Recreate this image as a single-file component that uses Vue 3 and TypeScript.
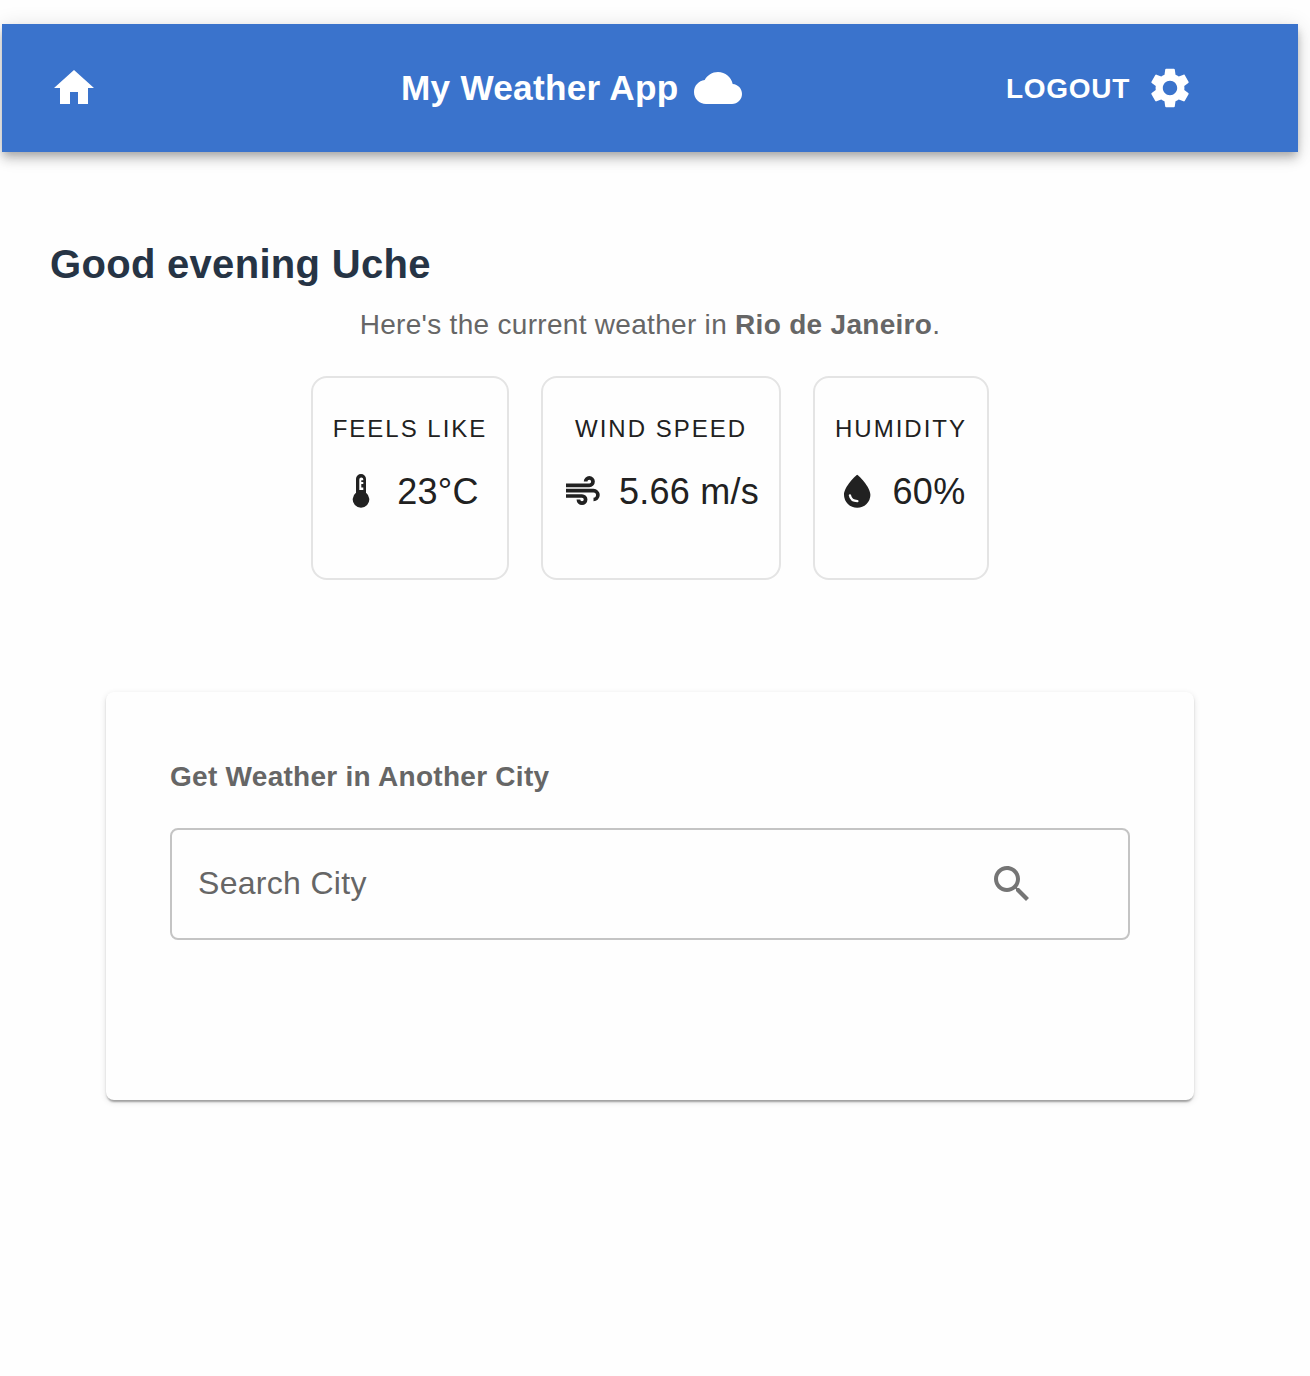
<script setup lang="ts">
import { ref } from 'vue'

type Kind = 'temp' | 'wind' | 'humidity'

interface Metric {
  kind: Kind
  label: string
  value: string
}

const city = ref('')
const metrics: Metric[] = [
  { kind: 'temp', label: 'Feels like', value: '23°C' },
  { kind: 'wind', label: 'Wind speed', value: '5.66 m/s' },
  { kind: 'humidity', label: 'Humidity', value: '60%' },
]
</script>

<template>
  <div class="page">
    <header class="bar">
      <a class="home" aria-label="Home">
        <svg class="icon" viewBox="0 0 24 24"><path d="M10 20v-6h4v6h5v-8h3L12 3 2 12h3v8z" /></svg>
      </a>
      <div class="brand">
        <span class="title">My Weather App</span>
        <svg class="icon" viewBox="0 0 24 24">
          <path d="M19.35 10.04C18.67 6.59 15.64 4 12 4 9.11 4 6.6 5.64 5.35 8.04 2.34 8.36 0 10.91 0 14c0 3.31 2.69 6 6 6h13c2.76 0 5-2.24 5-5 0-2.64-2.05-4.78-4.65-4.96z" />
        </svg>
      </div>
      <div class="actions">
        <span class="logout">LOGOUT</span>
        <svg class="icon" viewBox="0 0 24 24">
          <path d="M19.14 12.94c.04-.3.06-.61.06-.94 0-.32-.02-.64-.07-.94l2.03-1.58c.18-.14.23-.41.12-.61l-1.92-3.32c-.12-.22-.37-.29-.59-.22l-2.39.96c-.5-.38-1.03-.7-1.62-.94l-.36-2.54c-.04-.24-.24-.41-.48-.41h-3.84c-.24 0-.43.17-.47.41l-.36 2.54c-.59.24-1.13.57-1.62.94l-2.39-.96c-.22-.08-.47 0-.59.22L2.74 8.87c-.12.21-.08.47.12.61l2.03 1.58c-.05.3-.09.63-.09.94s.02.64.07.94l-2.03 1.58c-.18.14-.23.41-.12.61l1.92 3.32c.12.22.37.29.59.22l2.39-.96c.5.38 1.03.7 1.62.94l.36 2.54c.05.24.24.41.48.41h3.84c.24 0 .44-.17.47-.41l.36-2.54c.59-.24 1.13-.56 1.62-.94l2.39.96c.22.08.47 0 .59-.22l1.92-3.32c.12-.22.07-.47-.12-.61l-2.01-1.58zM12 15.6c-1.98 0-3.6-1.62-3.6-3.6s1.62-3.6 3.6-3.6 3.6 1.62 3.6 3.6-1.62 3.6-3.6 3.6z" />
        </svg>
      </div>
    </header>

    <main>
      <h1 class="greeting">Good evening Uche</h1>
      <p class="summary">Here's the current weather in <b>Rio de Janeiro</b>.</p>

      <section class="cards">
        <article v-for="m in metrics" :key="m.kind" class="card" :class="m.kind">
          <div class="label">{{ m.label }}</div>
          <div class="reading">
            <svg v-if="m.kind === 'temp'" class="glyph" viewBox="0 0 36 36">
              <path d="M13 6a5 5 0 0 1 10 0v13.8a8.3 8.3 0 1 1-10 0z" />
              <path class="cut" d="M16.3 6.4a1.9 1.9 0 0 1 4 0v.8h-2v1.9h2v1.8h-2v3.7h2V17h-4z" />
            </svg>
            <svg v-else-if="m.kind === 'wind'" class="glyph line" viewBox="0 0 36 36">
              <path d="M1 12.3h23.3a3.7 3.7 0 1 0-3.7-3.7M1 17.7h27.5a4.4 4.4 0 0 1 0 8.8M1 23h16a3.6 3.6 0 1 1-3.6 3.6" />
            </svg>
            <svg v-else class="glyph" viewBox="0 0 36 36">
              <path d="M18.2 1.7C19 1.7 31.4 13.6 31.4 21.8a13.2 12.9 0 0 1-26.4 0C5 13.6 17.4 1.7 18.2 1.7z" />
              <path class="shine" d="M10.9 22.3c.6 3.4 3.3 5.8 7.5 5.9" />
            </svg>
            <span class="value">{{ m.value }}</span>
          </div>
        </article>
      </section>

      <section class="panel">
        <h2>Get Weather in Another City</h2>
        <div class="field">
          <input v-model="city" type="text" placeholder="Search City" aria-label="Search City" />
          <svg class="icon" viewBox="0 0 24 24">
            <path d="M15.5 14h-.79l-.28-.27C15.41 12.59 16 11.11 16 9.5 16 5.91 13.09 3 9.5 3S3 5.91 3 9.5 5.91 16 9.5 16c1.61 0 3.09-.59 4.23-1.57l.27.28v.79l5 4.99L20.49 19l-4.99-5zm-6 0C7.01 14 5 11.99 5 9.5S7.01 5 9.5 5 14 7.01 14 9.5 11.99 14 9.5 14z" />
          </svg>
        </div>
      </section>
    </main>
  </div>
</template>

<style>
body {
  margin: 0;
  background: #fefefe;
}
</style>

<style scoped>
.page {
  box-sizing: border-box;
  width: 1310px;
  height: 1376px;
  padding: 24px 12px 0 2px;
  overflow: hidden;
  background: #fefefe;
  color: #212121;
  font-family: "Liberation Sans", Arial, Helvetica, sans-serif;
}

.icon {
  display: block;
  flex: none;
  width: 48px;
  height: 48px;
  fill: currentColor;
}

.bar {
  box-sizing: border-box;
  display: flex;
  align-items: center;
  height: 128px;
  padding: 0 104px 0 48px;
  background: #3a73cc;
  color: #fff;
  box-shadow:
    0 4px 8px -2px rgba(0, 0, 0, 0.2),
    0 8px 10px 0 rgba(0, 0, 0, 0.14),
    0 2px 20px 0 rgba(0, 0, 0, 0.12);
}

.home {
  width: 351px;
}

.brand,
.actions {
  display: flex;
  align-items: center;
  white-space: nowrap;
}

.brand {
  width: 341px;
  justify-content: space-between;
}

.title {
  font-size: 35.2px;
  font-weight: 700;
  letter-spacing: 0.264px;
}

.actions {
  width: 188px;
  margin-left: auto;
  justify-content: space-between;
}

.logout {
  padding-top: 1px;
  font-size: 28px;
  font-weight: 700;
  letter-spacing: 0.7px;
}

main {
  display: flex;
  flex-direction: column;
}

.greeting {
  margin: 80px 0 0 48px;
  font-size: 40px;
  line-height: 64px;
  font-weight: 700;
  letter-spacing: 0.3px;
  color: #263445;
}

.summary {
  margin: 9px 0 0;
  font-size: 28px;
  line-height: 40px;
  letter-spacing: 0.3px;
  text-align: center;
  color: #666;
}

.cards {
  display: flex;
  justify-content: center;
  gap: 32px;
  margin-top: 31px;
}

.card {
  box-sizing: border-box;
  height: 204px;
  padding-top: 19px;
  border: 2px solid #e4e4e4;
  border-radius: 16px;
  text-align: center;
  white-space: nowrap;
}

.temp {
  width: 198px;
}

.wind {
  width: 240px;
}

.humidity {
  width: 176px;
}

.label {
  font-size: 24px;
  line-height: 64px;
  letter-spacing: 2px;
  text-transform: uppercase;
}

.reading {
  display: flex;
  align-items: center;
  justify-content: center;
  gap: 18px;
  height: 60px;
  font-size: 36px;
  letter-spacing: 0.27px;
}

.value {
  margin-right: -2px;
  padding-top: 2px;
}

.glyph {
  flex: none;
  width: 36px;
  height: 36px;
  fill: #212121;
}

.glyph.line {
  fill: none;
  stroke: #212121;
  stroke-width: 3.7;
}

.cut {
  fill: #fefefe;
}

.shine {
  fill: none;
  stroke: #fefefe;
  stroke-width: 2.3;
  stroke-linecap: round;
}

.panel {
  box-sizing: border-box;
  width: 1088px;
  height: 408px;
  margin: 112px auto 0;
  padding: 65px 64px 64px;
  border-radius: 8px;
  background: #fefefe;
  box-shadow:
    0 4px 2px -2px rgba(0, 0, 0, 0.2),
    0 2px 2px 0 rgba(0, 0, 0, 0.14),
    0 2px 6px 0 rgba(0, 0, 0, 0.12);
}

.panel h2 {
  margin: 0 0 31px;
  font-size: 28px;
  line-height: 40px;
  font-weight: 700;
  letter-spacing: 0.28px;
  color: #666;
}

.field {
  box-sizing: border-box;
  display: flex;
  align-items: center;
  justify-content: space-between;
  width: 960px;
  height: 112px;
  padding: 0 92px 0 26px;
  border: 2px solid #c4c4c4;
  border-radius: 8px;
  color: #757575;
}

.field input {
  width: 700px;
  padding: 0 0 2px;
  border: 0;
  outline: 0;
  background: transparent;
  color: #212121;
  font: 32px/46px "Liberation Sans", Arial, Helvetica, sans-serif;
  letter-spacing: 0.3px;
}

.field input::placeholder {
  color: #666;
  opacity: 1;
}
</style>
